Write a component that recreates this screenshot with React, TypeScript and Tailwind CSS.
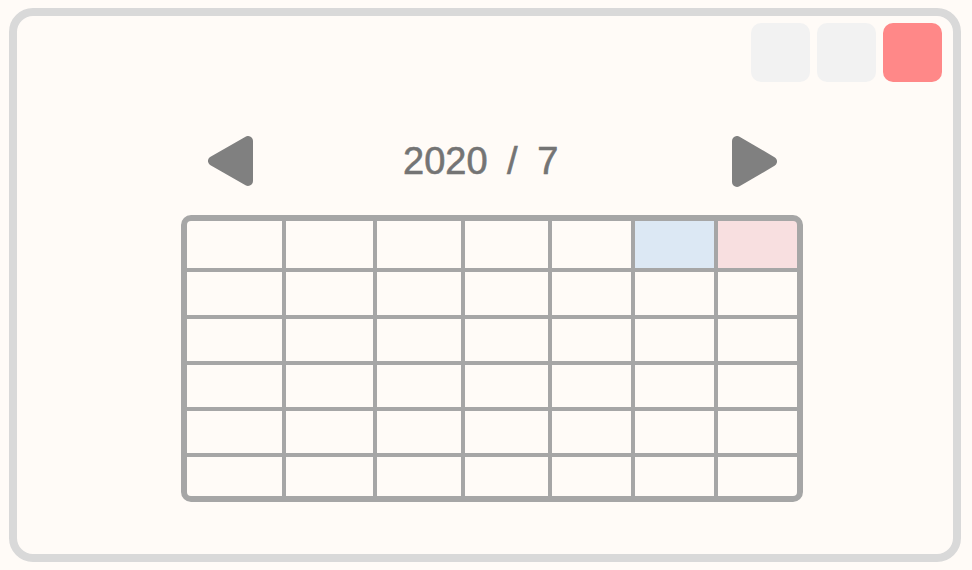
import React from 'react';

const rows = 6;
const cols = 7;

function Arrow({ dir }: { dir: 'left' | 'right' }) {
  const points = dir === 'left' ? '40,5 40,45 5,25' : '5,5 5,46 40,25.5';
  return (
    <svg width="45" height={dir === 'left' ? 50 : 51} viewBox={dir === 'left' ? '0 0 45 50' : '0 0 45 51'}>
      <polygon points={points} fill="#808080" stroke="#808080" strokeWidth="10" strokeLinejoin="round" />
    </svg>
  );
}

export default function App() {
  const cells = Array.from({ length: rows * cols }, (_, i) => i);

  return (
    <div className="w-[972px] h-[570px] bg-[#fffbf7] pl-[9px] pr-[11px] pt-[8px] pb-[8px]">
      <div className="h-full rounded-[24px] border-[8px] border-[#d9d9d9] bg-[#fffbf7] flex flex-col">
        {/* Window buttons */}
        <div className="flex justify-end gap-[7px] pt-[7px] pr-[11px]">
          <button className="w-[59px] h-[59px] rounded-[10px] bg-[#f2f2f2]" aria-label="minimize" />
          <button className="w-[59px] h-[59px] rounded-[10px] bg-[#f2f2f2]" aria-label="maximize" />
          <button className="w-[59px] h-[59px] rounded-[10px] bg-[#ff8888]" aria-label="close" />
        </div>

        {/* Month header */}
        <div className="mt-[54px] ml-[191px] w-[569px] h-[50px] flex items-center">
          <button aria-label="previous month" className="flex">
            <Arrow dir="left" />
          </button>
          <div
            className="ml-[150px] text-[38px] leading-none text-[#747474] [word-spacing:9px] [-webkit-text-stroke:0.6px_#747474]"
            style={{ fontFamily: '"Liberation Sans", Arial, sans-serif' }}
          >
            2020 / 7
          </div>
          <button aria-label="next month" className="flex ml-auto mt-[1px]">
            <Arrow dir="right" />
          </button>
        </div>

        {/* Calendar grid */}
        <div className="mt-[29px] ml-[164px] w-[622px] rounded-[10px] border-[6px] border-[#a6a6a6] bg-[#a6a6a6] overflow-hidden">
          <div className="grid grid-cols-[95px_87px_84px_83px_79px_79px_79px] grid-rows-[47px_43px_42px_42px_42px_39px] gap-[4px]">
            {cells.map((i) => (
              <div
                key={i}
                className={
                  i === 5 ? 'bg-[#dce8f4]' : i === 6 ? 'bg-[#f8dfe0]' : 'bg-[#fffbf7]'
                }
              />
            ))}
          </div>
        </div>
      </div>
    </div>
  );
}
